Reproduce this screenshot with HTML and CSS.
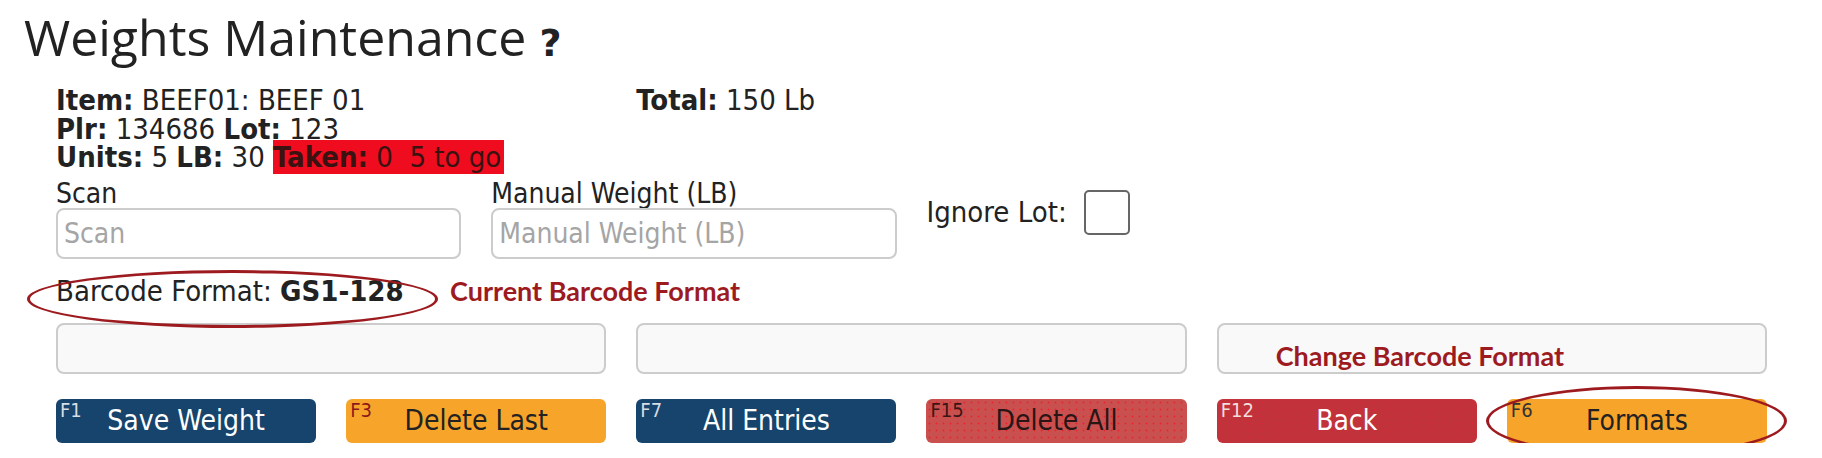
FILE: index.html
```html
<!DOCTYPE html>
<html lang="en">
<head>
  <meta charset="UTF-8" />
  <title>Weights Maintenance</title>
  <link rel="stylesheet" href="styles.css">
</head>
<body>
  <h1 class="page-title">Weights Maintenance <span class="help">?</span></h1>

  <div class="main">
    <div class="info grid-3">
      <div class="info-lines">
        <div><b>Item:</b> BEEF01: BEEF 01</div>
        <div><b>Plr:</b> 134686 <b>Lot:</b> 123</div>
        <div><b>Units:</b> 5 <b>LB:</b> 30 <span class="taken"><b>Taken:</b> 0&nbsp; 5 to go</span></div>
      </div>
      <div class="info-lines"><div><b>Total:</b> 150 Lb</div></div>
    </div>

    <div class="entry grid-4">
      <label class="field">
        <span class="field-label">Scan</span>
        <input type="text" class="field-input" placeholder="Scan" />
      </label>
      <label class="field">
        <span class="field-label">Manual Weight (LB)</span>
        <input type="text" class="field-input" placeholder="Manual Weight (LB)" />
      </label>
      <div class="ignore">
        <span>Ignore Lot:</span>
        <span class="check"></span>
      </div>
    </div>

    <div class="barcode">
      <span class="barcode-text">Barcode Format: <b>GS1-128</b></span>
      <span class="note">Current Barcode Format</span>
      <span class="oval oval-barcode"></span>
    </div>

    <div class="boxes grid-3">
      <div class="box"></div>
      <div class="box"></div>
      <div class="box"><span class="note">Change Barcode Format</span></div>
    </div>

    <div class="buttons grid-6">
      <button class="btn btn-blue"><span class="key">F1</span>Save Weight</button>
      <button class="btn btn-orange"><span class="key">F3</span>Delete Last</button>
      <button class="btn btn-blue"><span class="key">F7</span>All Entries</button>
      <button class="btn btn-pink"><span class="key">F15</span>Delete All</button>
      <button class="btn btn-red"><span class="key">F12</span>Back</button>
      <button class="btn btn-orange btn-formats"><span class="key">F6</span>Formats<span class="oval oval-formats"></span></button>
    </div>
  </div>
</body>
</html>
```

FILE: styles.css
```css
body {
  margin: 0;
  font-family: "DejaVu Sans Condensed", "DejaVu Sans", sans-serif;
  color: #222;
  background: #fff;
}

.page-title {
  font-family: "Open Sans", sans-serif;
  font-weight: 400;
  font-size: 50px;
  line-height: 50px;
  height: 50px;
  margin: 12px 0 0 24px;
  color: #222;
}
.help {
  font-family: "DejaVu Sans", sans-serif;
  font-weight: bold;
  font-size: 38px;
}

.main {
  padding: 0 55px 0 56px;
}

.grid-3, .grid-4, .grid-6 {
  display: grid;
  column-gap: 30px;
}
.grid-3 { grid-template-columns: repeat(3, 1fr); }
.grid-4 { grid-template-columns: repeat(4, 1fr); }
.grid-6 { grid-template-columns: repeat(6, 1fr); }

.info {
  margin-top: 24px;
  font-size: 29px;
  line-height: 28.5px;
}
.taken {
  background: #ee0c1e;
  color: #3a1212;
  padding-right: 3px;
}

.entry {
  margin-top: 8px;
}
.field {
  display: flex;
  flex-direction: column;
}
.field-label {
  font-size: 28px;
  line-height: 28px;
}
.field-input {
  height: 51px;
  box-sizing: border-box;
  border: 2px solid #ccc;
  border-radius: 8px;
  padding: 0 6px;
  font-family: inherit;
  font-size: 28px;
}
.field-input::placeholder {
  color: #a5a5a5;
}

.ignore {
  display: flex;
  align-items: center;
  gap: 17px;
  font-size: 29px;
  margin-top: 10px;
  align-self: start;
}
.check {
  width: 46px;
  height: 45px;
  box-sizing: border-box;
  border: 2px solid #666;
  border-radius: 5px;
}

.barcode {
  position: relative;
  display: flex;
  align-items: center;
  height: 40px;
  margin-top: 12px;
  font-size: 29px;
}
.barcode-text {
  width: 394px;
  flex-shrink: 0;
}
.note {
  font-family: "Lato", sans-serif;
  font-weight: bold;
  color: #9d1b1f;
  font-size: 27px;
  line-height: 27px;
}

.oval {
  position: absolute;
  box-sizing: border-box;
  border: 3px solid #9d1b1f;
  border-radius: 50%;
  pointer-events: none;
}
.oval-barcode {
  left: -29px;
  top: -1px;
  width: 411px;
  height: 58px;
}
.oval-formats {
  left: -21px;
  top: -13px;
  width: 301px;
  height: 70px;
}

.boxes {
  margin-top: 12px;
}
.box {
  height: 51px;
  box-sizing: border-box;
  border: 2px solid #ccc;
  border-radius: 8px;
  background: #f9f9f9;
  display: flex;
  align-items: center;
  padding: 14px 0 0 57px;
}

.buttons {
  margin-top: 25px;
}
.btn {
  position: relative;
  height: 44px;
  border: none;
  border-radius: 6px;
  font-family: inherit;
  font-size: 28px;
  text-align: center;
  padding: 0;
}
.key {
  position: absolute;
  left: 4px;
  top: 1px;
  font-size: 20px;
  line-height: 20px;
}
.btn-blue { background: #16446d; color: #fff; }
.btn-blue .key { color: #d8dde4; }
.btn-orange { background: #f7a42a; color: #222; }
.btn-orange .key { color: #8a1a1a; }
.btn-formats .key { color: #333; }
.btn-pink {
  background: #c9504e radial-gradient(circle, #e8242c 0.7px, transparent 1.2px);
  background-size: 7px 7px;
  color: #2a1515;
}
.btn-pink .key { color: #3a1515; }
.btn-red {
  background: #c1323a radial-gradient(circle, #d4283a 0.6px, transparent 1.1px);
  background-size: 7px 7px;
  color: #fff;
}
.btn-red .key { color: #f3dede; }
```
